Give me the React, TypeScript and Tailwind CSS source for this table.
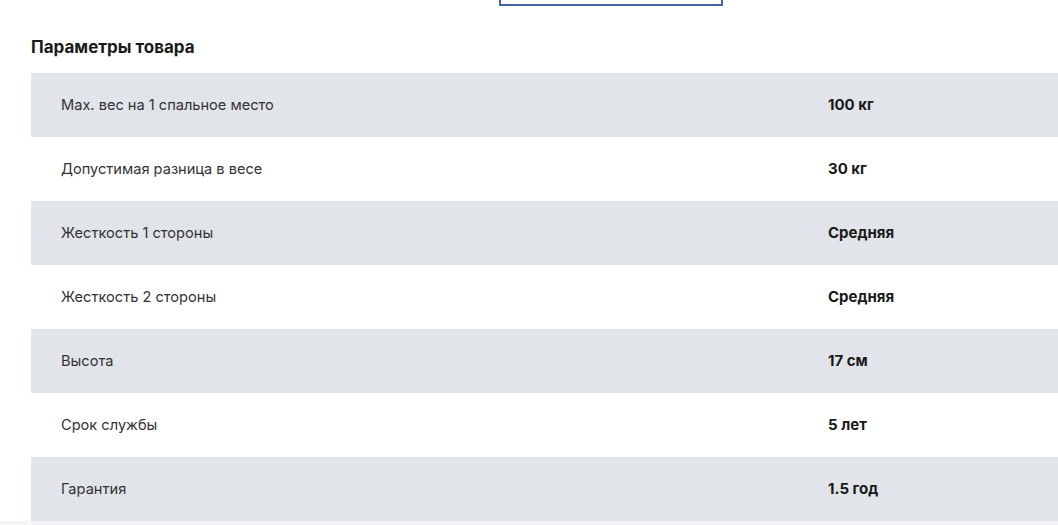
const params: { label: string; value: string }[] = [
  { label: "Max. вес на 1 спальное место", value: "100 кг" },
  { label: "Допустимая разница в весе", value: "30 кг" },
  { label: "Жесткость 1 стороны", value: "Средняя" },
  { label: "Жесткость 2 стороны", value: "Средняя" },
  { label: "Высота", value: "17 см" },
  { label: "Срок службы", value: "5 лет" },
  { label: "Гарантия", value: "1.5 год" },
];

export default function App() {
  return (
    <div
      className="w-[1058px] h-[525px] overflow-hidden bg-white text-[#1d1d1f]"
      style={{ fontFamily: "Inter, 'Noto Sans', sans-serif" }}
    >
      <div className="ml-[499px] h-[6px] w-[224px] border-2 border-t-0 border-[#4862a9]" />
      <h2 className="ml-[31px] mt-[29px] h-6 text-[17px] font-bold leading-6 text-[#1a1a1a]">
        Параметры товара
      </h2>
      <div className="ml-[31px] mt-[14px]">
        {params.map((p, i) => (
          <div
            key={p.label}
            className={`flex h-16 items-center ${i % 2 === 0 ? "bg-[#e1e5e9]" : "bg-white"}`}
          >
            <div className="w-[797px] pl-[30px] pt-[2px] text-[14.6px] text-[#333333]">{p.label}</div>
            <div className="text-[15px] font-bold text-[#1a1a1a]">{p.value}</div>
          </div>
        ))}
      </div>
      <div className="h-5 bg-[#f4f5f7]" />
    </div>
  );
}
